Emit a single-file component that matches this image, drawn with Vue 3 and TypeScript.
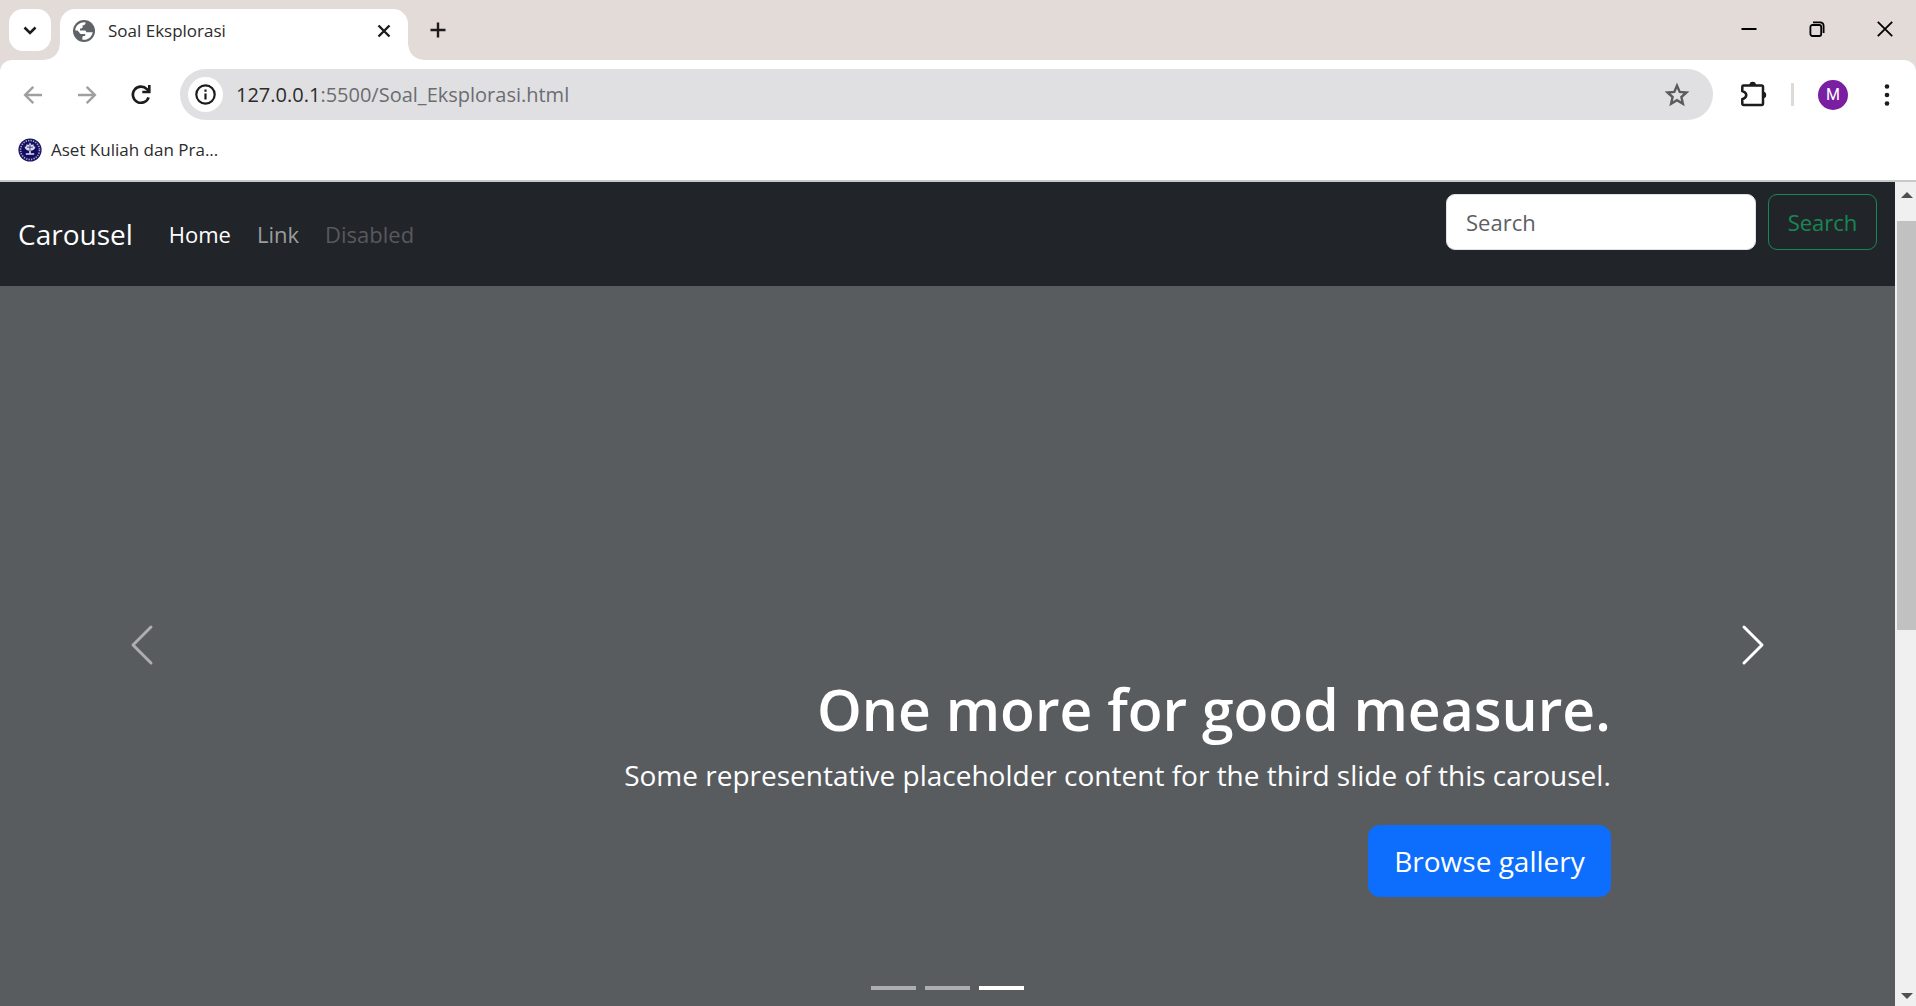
<script setup lang="ts">
import { ref } from 'vue'

interface NavItem {
  label: string
  state: 'active' | 'normal' | 'disabled'
}

const navItems: NavItem[] = [
  { label: 'Home', state: 'active' },
  { label: 'Link', state: 'normal' },
  { label: 'Disabled', state: 'disabled' },
]

const slideCount = 3
const current = ref(2)
const query = ref('')
</script>

<template>
  <div class="window">
    <header class="chrome">
      <div class="tabstrip">
        <button class="tab-search" aria-label="Search tabs">
          <svg width="18" height="18" viewBox="0 0 18 18"><path d="M3.500 6.500 9 12l5.500-5.500" fill="none" stroke="#1d1b1b" stroke-width="2.600" /></svg>
        </button>
        <div class="tab">
          <svg class="globe" width="22" height="22" viewBox="0 0 22 22">
            <circle cx="11" cy="11" r="11" fill="#5f6368" />
            <path d="M2.200 10.400C2.500 5.800 6.200 2.300 11.200 2.200L12.600 2.400C12.600 4.300 11.500 5.200 9.600 5.300V7.300C9.600 8 9 8.400 8.300 8.400H7V10.400H11.600C12.600 10.400 13.200 11 13.200 12.300H17C18.200 12.300 19 12.500 19.700 12.200C19 16.600 15.500 19.800 11 19.800H9.400V17.500C9.400 16.500 10 16 11 16H12.200V14H8.800C7.600 14 6.800 13.300 6.300 12.400L4.500 10.600Z" fill="#fff" />
          </svg>
          <span class="tab-title">Soal Eksplorasi</span>
          <button class="bare" aria-label="Close tab">
            <svg width="16" height="16" viewBox="0 0 16 16"><path d="m2.500 2.500 11 11m0-11-11 11" stroke="#1d1b1b" stroke-width="2.400" /></svg>
          </button>
        </div>
        <button class="bare new-tab" aria-label="New tab">
          <svg width="18" height="18" viewBox="0 0 18 18"><path d="M9 1.500v15M1.500 9h15" stroke="#1d1b1b" stroke-width="2.400" /></svg>
        </button>
        <div class="window-controls">
          <button class="bare" aria-label="Minimize">
            <svg width="16" height="16" viewBox="0 0 16 16"><path d="M.5 8h15" stroke="#000" stroke-width="2" /></svg>
          </button>
          <button class="bare" aria-label="Restore">
            <svg width="16" height="16" viewBox="0 0 16 16" fill="none" stroke="#000" stroke-width="1.800">
              <rect x="1.400" y="4" width="10.800" height="11" rx="2" />
              <path d="M4 1.400h7c2.200 0 3.600 1.400 3.600 3.600v7" />
            </svg>
          </button>
          <button class="bare" aria-label="Close">
            <svg width="16" height="16" viewBox="0 0 16 16"><path d="m.8.8 14.400 14.400m0-14.400L.8 15.200" stroke="#000" stroke-width="1.800" /></svg>
          </button>
        </div>
      </div>

      <div class="toolbar">
        <button class="bare nav-button" aria-label="Back">
          <svg width="20" height="20" viewBox="0 0 20 20"><path d="M19 10H3M10.300 1.800 2.100 10l8.200 8.200" fill="none" stroke="#9f9f9f" stroke-width="2.400" /></svg>
        </button>
        <button class="bare nav-button" aria-label="Forward">
          <svg width="20" height="20" viewBox="0 0 20 20"><path d="M1 10h16M9.700 1.800l8.200 8.200-8.200 8.200" fill="none" stroke="#9f9f9f" stroke-width="2.400" /></svg>
        </button>
        <button class="bare nav-button" aria-label="Reload">
          <svg width="22" height="22" viewBox="0 0 22 22">
            <path d="M18.600 13.300a8.100 8.100 0 1 1-1.700-8.100L19 7.400" fill="none" stroke="#1d1b1b" stroke-width="2.600" />
            <path d="M20.600 1v8.300h-8.300V6.800H18V1z" fill="#1d1b1b" />
          </svg>
        </button>
        <div class="omnibox">
          <button class="bare site-info" aria-label="Site information">
            <svg width="21" height="21" viewBox="0 0 21 21">
              <circle cx="10.500" cy="10.500" r="9.200" fill="none" stroke="#1d1b1b" stroke-width="2.200" />
              <path d="M10.500 9.500v6M10.500 5.500v2.300" stroke="#1d1b1b" stroke-width="2.200" />
            </svg>
          </button>
          <span class="url"><b>127.0.0.1</b>:5500/Soal_Eksplorasi.html</span>
          <button class="bare" aria-label="Bookmark this page">
            <svg width="26" height="26" viewBox="0 0 26 26"><path d="m13 3.600 2.700 6.300 6.800.6-5.100 4.500 1.500 6.700-5.900-3.500-5.900 3.500L8.600 15l-5.100-4.500 6.800-.6z" fill="none" stroke="#5b5b5d" stroke-width="2.400" /></svg>
          </button>
        </div>
        <button class="bare extensions" aria-label="Extensions">
          <svg width="28" height="28" viewBox="0 0 28 28">
            <path d="M4.500 4.500h18.300a1.200 1.200 0 0 1 1.200 1.200v17.100a1.200 1.200 0 0 1-1.200 1.200H4.500a1.200 1.200 0 0 1-1.200-1.200v-4.500c5.300-1.800 5.300-6.700 0-8.200V5.700a1.200 1.200 0 0 1 1.200-1.200z" fill="none" stroke="#1d1b1b" stroke-width="2.500" />
            <path d="M10.500 4a3.200 3.200 0 0 1 6.400 0zM24 10.800a3.200 3.200 0 0 1 0 6.400z" fill="#1d1b1b" />
          </svg>
        </button>
        <span class="divider"></span>
        <button class="avatar" aria-label="Profile">M</button>
        <button class="bare menu" aria-label="Menu">
          <svg width="6" height="24" viewBox="0 0 6 24" fill="#1d1b1b"><circle cx="3" cy="3.500" r="2.300" /><circle cx="3" cy="12" r="2.300" /><circle cx="3" cy="20.500" r="2.300" /></svg>
        </button>
      </div>

      <div class="bookmarks">
        <a href="#" class="bookmark">
          <svg width="24" height="24" viewBox="0 0 24 24">
            <circle cx="12" cy="12" r="11.600" fill="#17135f" />
            <circle cx="12" cy="12" r="9.500" fill="none" stroke="#a9a8cc" stroke-width="1.600" stroke-dasharray="1.300 1.200" />
            <circle cx="12" cy="12" r="7.800" fill="#120d62" />
            <path d="M12 4.500 13.500 7l2-.8.3 2.400 1.700.2-1 2.200-1.800 1.300-1.900.4v2.500h3.400v1.600H7.800v-1.600h3.400v-2.500l-1.900-.4-1.800-1.300-1-2.200 1.700-.2.300-2.400 2 .8z" fill="#dcdcee" />
            <path d="M9 9.200h6M12 6.500V13" stroke="#120d62" stroke-width=".7" />
          </svg>
          <span>Aset Kuliah dan Pra...</span>
        </a>
      </div>
    </header>

    <div class="content">
      <div class="page">
        <nav class="navbar">
          <a href="#" class="brand">Carousel</a>
          <ul class="nav-list">
            <li v-for="item in navItems" :key="item.label">
              <a href="#" :class="['nav-link', item.state]" :aria-disabled="item.state === 'disabled'">{{ item.label }}</a>
            </li>
          </ul>
          <form class="search" role="search" @submit.prevent>
            <input v-model="query" type="search" placeholder="Search" aria-label="Search" />
            <button type="submit">Search</button>
          </form>
        </nav>

        <main>
          <section class="carousel">
            <div class="caption">
              <h1>One more for good measure.</h1>
              <p>Some representative placeholder content for the third slide of this carousel.</p>
              <a href="#" class="cta">Browse gallery</a>
            </div>
            <button class="bare control prev" aria-label="Previous" @click="current = (current + 2) % slideCount">
              <svg width="48" height="48" viewBox="0 0 16 16"><path d="M11 2 5 8l6 6" fill="none" stroke="#fff" stroke-linecap="round" stroke-linejoin="round" /></svg>
            </button>
            <button class="bare control next" aria-label="Next" @click="current = (current + 1) % slideCount">
              <svg width="48" height="48" viewBox="0 0 16 16"><path d="m5 2 6 6-6 6" fill="none" stroke="#fff" stroke-linecap="round" stroke-linejoin="round" /></svg>
            </button>
            <div class="indicators">
              <button
                v-for="n in slideCount"
                :key="n"
                :class="{ active: current === n - 1 }"
                :aria-label="`Slide ${n}`"
                @click="current = n - 1"
              ></button>
            </div>
          </section>
        </main>
      </div>

      <div class="scrollbar" aria-hidden="true">
        <svg width="12" height="6" viewBox="0 0 12 6"><path d="m0 6 6-6 6 6z" fill="#505050" /></svg>
        <div class="track"><div class="thumb"></div></div>
        <svg width="12" height="6" viewBox="0 0 12 6"><path d="m0 0 6 6 6-6z" fill="#505050" /></svg>
      </div>
    </div>
  </div>
</template>

<style>
body {
  margin: 0;
}
</style>

<style scoped>
* {
  box-sizing: border-box;
}
.window {
  display: flex;
  flex-direction: column;
  height: 100vh;
  overflow: hidden;
  background: #e3dbd8;
  font-family: "Open Sans", "Noto Sans", sans-serif;
}
button,
input {
  font-family: inherit;
}
svg {
  display: block;
  flex: none;
}
a {
  text-decoration: none;
}
.bare {
  display: flex;
  align-items: center;
  justify-content: center;
  padding: 0;
  border: 0;
  background: none;
}

/* Tab strip */
.tabstrip {
  display: flex;
  align-items: flex-start;
  height: 60px;
  padding: 9px 9px 0;
}
.tab-search {
  display: flex;
  align-items: center;
  justify-content: center;
  width: 42px;
  height: 42px;
  padding: 0;
  border: 0;
  border-radius: 14px;
  background: #fff;
}
.tab {
  position: relative;
  display: flex;
  align-items: center;
  width: 348px;
  height: 51px;
  margin-left: 9px;
  padding: 0 16px 8px 13px;
  border-radius: 15px 15px 0 0;
  background: #fff;
}
.tab::before,
.tab::after {
  content: "";
  position: absolute;
  bottom: 0;
  width: 15px;
  height: 15px;
}
.tab::before {
  right: 100%;
  background: radial-gradient(circle at 0 0, transparent 14px, #fff 15px);
}
.tab::after {
  left: 100%;
  background: radial-gradient(circle at 100% 0, transparent 14px, #fff 15px);
}
.tab-title {
  flex: 1;
  margin-left: 13px;
  font-size: 17px;
  line-height: 24px;
  color: #2b2b2b;
}
.new-tab {
  width: 42px;
  height: 42px;
  margin-left: 9px;
}
.window-controls {
  display: flex;
  gap: 52px;
  height: 40px;
  margin-left: auto;
  padding-right: 14px;
}

/* Toolbar */
.toolbar {
  display: flex;
  align-items: center;
  height: 69px;
  padding: 0 10px 0 6px;
  border-radius: 12px 12px 0 0;
  background: #fff;
}
.nav-button {
  width: 54px;
  height: 42px;
}
.omnibox {
  display: flex;
  flex: 1;
  align-items: center;
  height: 51px;
  margin: 0 22px 0 12px;
  padding: 0 23px 0 8px;
  border-radius: 26px;
  background: #e0e0e2;
}
.site-info {
  width: 35px;
  height: 35px;
  border-radius: 50%;
  background: #fff;
}
.url {
  flex: 1;
  margin-left: 13px;
  font-size: 20px;
  line-height: 28px;
  color: #6a6d71;
}
.url b {
  font-weight: 400;
  color: #2b2b2b;
}
.extensions {
  width: 36px;
  height: 36px;
}
.divider {
  width: 3px;
  height: 23px;
  margin: 0 24px 0 20px;
  background: #e0dad7;
}
.avatar {
  width: 30px;
  height: 30px;
  padding: 0;
  border: 0;
  border-radius: 50%;
  background: #7b1fa2;
  color: #fff;
  font-family: Roboto, sans-serif;
  font-size: 16px;
}
.menu {
  width: 38px;
  height: 36px;
  margin-left: 20px;
}
.bookmarks {
  height: 53px;
  padding: 9px 18px 0;
  border-bottom: 2px solid #c8c9ca;
  background: #fff;
}
.bookmark {
  display: inline-flex;
  align-items: center;
  gap: 9px;
  font-size: 17px;
  line-height: 24px;
  color: #2b2b2b;
}

/* Page */
.content {
  display: flex;
  flex: 1;
  min-height: 0;
}
.page {
  position: relative;
  flex: 1;
  overflow: hidden;
  background: #595c5f;
}
.navbar {
  position: absolute;
  z-index: 1;
  top: 0;
  right: 0;
  left: 0;
  display: flex;
  align-items: center;
  height: 104px;
  padding: 12px 18px;
  background: #212529;
}
.brand {
  font-size: 28px;
  line-height: 44px;
  color: #fff;
}
.nav-list {
  display: flex;
  gap: 26px;
  margin: 0 0 0 36px;
  padding: 0;
  list-style: none;
}
.nav-link {
  font-size: 22px;
  line-height: 36px;
  color: #9b9d9e;
}
.nav-link.active {
  color: #fff;
}
.nav-link.disabled {
  color: #58595c;
}
.search {
  display: flex;
  align-self: flex-start;
  gap: 12px;
  margin-left: auto;
}
.search input {
  width: 310px;
  height: 56px;
  padding: 0 19px;
  border: 1px solid #dee2e6;
  border-radius: 9px;
  background: #fff;
  font-size: 22px;
  color: #212529;
}
.search input::placeholder {
  color: #5d6063;
  opacity: 1;
}
.search button {
  width: 109px;
  height: 56px;
  padding: 0;
  border: 1px solid #198754;
  border-radius: 9px;
  background: none;
  font-size: 22px;
  color: #198754;
}
main {
  padding-top: 79px;
}
.carousel {
  position: relative;
  display: flex;
  flex-direction: column;
  justify-content: flex-end;
  height: 768px;
  padding: 0 15% 132px;
}
.caption {
  display: flex;
  flex-direction: column;
  align-items: flex-end;
  text-align: right;
  color: #fff;
}
h1 {
  margin: 0 0 8px;
  font-size: 57px;
  font-weight: 600;
  line-height: 72px;
}
.caption p {
  margin: 0 0 28px;
  font-size: 28px;
  line-height: 44px;
}
.cta {
  padding: 14px 26px;
  border-radius: 12px;
  background: #0d6efd;
  font-size: 28px;
  line-height: 44px;
  color: #fff;
}
.control {
  position: absolute;
  top: 0;
  bottom: 0;
  width: 15%;
}
.prev {
  left: 0;
  opacity: 0.5;
}
.next {
  right: 0;
}
.indicators {
  position: absolute;
  right: 0;
  bottom: 39px;
  left: 0;
  display: flex;
  justify-content: center;
  gap: 9px;
}
.indicators button {
  width: 45px;
  height: 4px;
  padding: 0;
  border: 0;
  background: #fff;
  opacity: 0.5;
}
.indicators button.active {
  opacity: 1;
}

/* Scrollbar */
.scrollbar {
  display: flex;
  flex-direction: column;
  align-items: center;
  width: 21px;
  padding: 10px 0 7px 2px;
  background: #f0f0f0;
}
.track {
  align-self: stretch;
  flex: 1;
  margin: 23px 0 22px;
}
.thumb {
  height: 54.5%;
  background: #c1c1c1;
}
</style>
